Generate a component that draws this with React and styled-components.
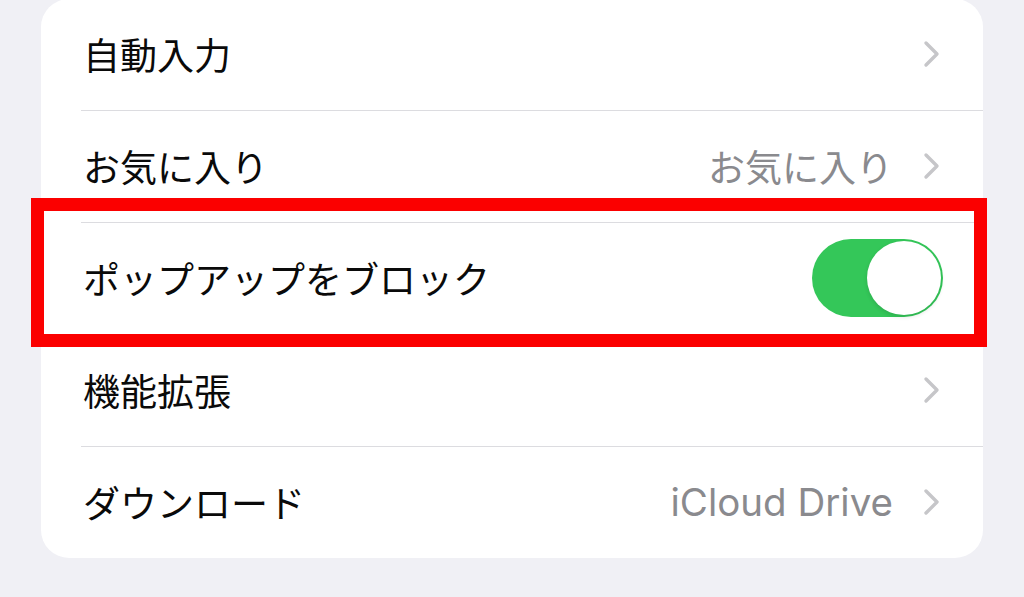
import React from 'react';
import styled, {createGlobalStyle} from 'styled-components';

const GlobalStyle = createGlobalStyle`
    body {
        margin: 0;
        background: #f0f0f5;
        font-family: "Inter", "Noto Sans CJK JP", sans-serif;
        overflow: hidden;
    }
`;

const Screen = styled.div`
    width: 1024px;
    height: 597px;
    padding: 0 41px;
    box-sizing: border-box;
`;

const Card = styled.div`
    margin-top: -1px;
    width: 942px;
    background: #ffffff;
    border-radius: 28px;
`;

const Row = styled.div`
    position: relative;
    display: flex;
    align-items: center;
    height: 110.5px;
    padding: 0 ${p => p.$padRight || 43}px 0 42px;
    box-sizing: border-box;

    ${p => p.$highlighted && `
        &::after {
            content: '';
            position: absolute;
            top: -25px;
            bottom: -13px;
            left: -10px;
            right: -4px;
            border: 13px solid #fb0000;
            pointer-events: none;
        }
    `}
`;

const Divider = styled.div`
    height: 1.5px;
    margin-left: 40px;
    background: #dcdce0;
`;

const Label = styled.span`
    flex: 1;
    font-family: "Noto Sans CJK JP", sans-serif;
    font-size: 37px;
    color: #0a0a0a;
`;

const Value = styled.span`
    font-family: ${p => p.$latin ? '"Inter", sans-serif' : '"Noto Sans CJK JP", sans-serif'};
    font-size: ${p => p.$latin ? 38.5 : 37}px;
    color: #8a8a8e;
    margin-right: 30px;
`;

const Toggle = styled.div`
    width: 131px;
    height: 78px;
    border-radius: 39px;
    background: #34c759;
    display: flex;
    align-items: center;
    justify-content: flex-end;
    padding: 2px;
    box-sizing: border-box;
`;

const Knob = styled.div`
    width: 74px;
    height: 74px;
    border-radius: 50%;
    background: #ffffff;
    box-shadow: 0 2px 4px rgba(0, 0, 0, 0.12);
`;

const Chevron = () => (
    <svg width="17" height="28" viewBox="0 0 17 28">
        <polyline points="3,3 14,14 3,25" fill="none" stroke="#c6c6c9" strokeWidth="3.4" strokeLinecap="round" strokeLinejoin="round"/>
    </svg>
);

const NavRow = ({label, value, latin}) => (
    <Row>
        <Label>{label}</Label>
        {value && <Value $latin={latin}>{value}</Value>}
        <Chevron/>
    </Row>
);

export default function App() {
    return (
        <Screen>
            <GlobalStyle/>
            <Card>
                <NavRow label="自動入力"/>
                <Divider/>
                <NavRow label="お気に入り" value="お気に入り"/>
                <Divider/>
                <Row $highlighted $padRight={40}>
                    <Label>ポップアップをブロック</Label>
                    <Toggle><Knob/></Toggle>
                </Row>
                <Divider/>
                <NavRow label="機能拡張"/>
                <Divider/>
                <NavRow label="ダウンロード" value="iCloud Drive" latin/>
            </Card>
        </Screen>
    );
}
